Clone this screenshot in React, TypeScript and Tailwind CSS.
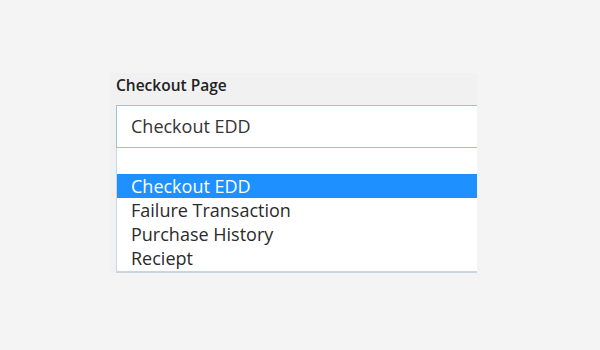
const options = ["Checkout EDD", "Failure Transaction", "Purchase History", "Reciept"];

export default function App() {
  return (
    <div className="h-[350px] w-[600px] bg-[#f4f4f4] pl-[110px] pt-[73px] font-['Open_Sans',sans-serif]">
      <div className="w-[367px] overflow-hidden bg-[#f1f1f1] pl-[6px]">
        <div className="h-[32px] pt-[2px] text-[15.5px] leading-[20px] font-semibold text-[#222]">Checkout Page</div>
        <div className="flex h-[43px] w-[380px] items-center border border-[#9cc2e2] bg-white pl-[14px] text-[18px] text-[#333]">
          Checkout EDD
        </div>
        <div className="w-[380px] border-b-2 border-l border-[#c9d6e2] bg-white pb-[1px]">
          <div className="h-[26px]" />
          {options.map((o, i) => (
            <div
              key={o}
              className={
                i === 0
                  ? "h-[24px] bg-[#1e90ff] pl-[14px] text-[18px] leading-[24px] text-white"
                  : "h-[24px] pl-[14px] text-[18px] leading-[24px] text-[#2b2b2b]"
              }
            >
              {o}
            </div>
          ))}
        </div>
      </div>
    </div>
  );
}
